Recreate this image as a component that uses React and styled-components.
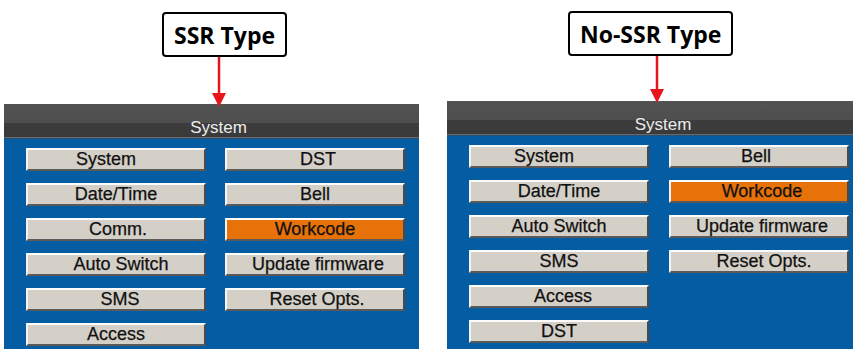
import React from 'react';
import styled, { createGlobalStyle } from 'styled-components';

const GlobalStyle = createGlobalStyle`
  body {
    margin: 0;
    background: #ffffff;
    overflow: hidden;
  }
`;

const Page = styled.div`
  display: flex;
  gap: 28px;
  width: 853px;
  height: 349px;
  padding-left: 4px;
  box-sizing: border-box;
  overflow: hidden;
`;

const Section = styled.div`
  display: flex;
  flex-direction: column;
  align-items: flex-start;
  width: ${(props) => props.width}px;
  height: 349px;
  padding-top: ${(props) => props.top}px;
  box-sizing: border-box;
`;

const Label = styled.div`
  margin-left: ${(props) => props.left}px;
  height: 45px;
  box-sizing: border-box;
  padding: 0 10px;
  display: flex;
  align-items: center;
  border: 2px solid #000000;
  border-radius: 4px;
  background: #ffffff;
  font-family: 'Open Sans', 'Liberation Sans', sans-serif;
  font-weight: 700;
  font-size: 23px;
  color: #000000;
  white-space: nowrap;
`;

const ArrowWrap = styled.div`
  margin-left: ${(props) => props.left}px;
  margin-bottom: ${(props) => -props.overlap}px;
  height: ${(props) => props.h}px;
  position: relative;
  z-index: 2;
  line-height: 0;
`;

const Panel = styled.div`
  flex: 1;
  align-self: stretch;
  display: flex;
  flex-direction: column;
  background: #045ca3;
`;

const Header = styled.div`
  height: 35px;
  box-sizing: border-box;
  padding-left: ${(props) => props.shift}px;
  display: flex;
  justify-content: center;
  align-items: flex-end;
  padding-bottom: 1px;
  background: linear-gradient(
    to bottom,
    #525252 0,
    #4e4e4e 19px,
    #3c3c3c 19px,
    #3a3a3a 33px,
    #6a6a6a 33px,
    #6a6a6a 34px,
    #2a4f78 34px
  );
  font-family: 'Liberation Sans', Arial, sans-serif;
  font-size: 17px;
  color: #ececec;
`;

const Grid = styled.div`
  display: grid;
  grid-auto-flow: column;
  grid-template-rows: repeat(6, 23px);
  grid-template-columns: 180px 180px;
  column-gap: ${(props) => props.gap}px;
  row-gap: 12px;
  padding: 9px 0 0 22px;
`;

const Button = styled.div`
  box-sizing: border-box;
  display: flex;
  align-items: center;
  justify-content: center;
  padding-left: ${(props) => (props.shift > 0 ? props.shift : 0)}px;
  padding-right: ${(props) => (props.shift < 0 ? -props.shift : 0)}px;
  background: ${(props) => (props.active ? '#e8720a' : '#d4d0c8')};
  border-top: 2px solid #fbfbfb;
  border-left: 2px solid #f4f4f4;
  border-right: 2px solid #4a4a4a;
  border-bottom: 2px solid #5a5a5a;
  font-family: 'Liberation Sans', Arial, sans-serif;
  font-size: 18px;
  color: #111111;
  -webkit-text-stroke: 0.25px #111111;
  white-space: nowrap;
`;

function Arrow({ left, h, overlap }) {
  return (
    <ArrowWrap left={left} h={h} overlap={overlap}>
      <svg width="20" height={h} viewBox={`0 0 20 ${h}`}>
        <line x1="10" y1="0" x2="10" y2={h - 13} stroke="#e8141c" strokeWidth="2.5" />
        <polygon points={`3,${h - 14} 17,${h - 14} 10,${h}`} fill="#e8141c" />
      </svg>
    </ArrowWrap>
  );
}

const ssrItems = [
  { name: 'System', shift: -20 },
  { name: 'Date/Time' },
  { name: 'Comm.', shift: 4 },
  { name: 'Auto Switch', shift: 10 },
  { name: 'SMS', shift: 8 },
  { name: 'Access' },
  { name: 'DST', shift: 6 },
  { name: 'Bell' },
  { name: 'Workcode', active: true },
  { name: 'Update firmware', shift: 6 },
  { name: 'Reset Opts.', shift: 4 },
];

const noSsrItems = [
  { name: 'System', shift: -30 },
  { name: 'Date/Time' },
  { name: 'Auto Switch' },
  { name: 'SMS' },
  { name: 'Access', shift: 8 },
  { name: 'DST' },
  { name: 'Bell', shift: -6 },
  { name: 'Workcode', shift: 6, active: true },
  { name: 'Update firmware', shift: 6 },
  { name: 'Reset Opts.', shift: 10 },
];

function Device({ title, width, top, labelLeft, arrowLeft, arrowH, overlap, headerShift, gap, items }) {
  return (
    <Section width={width} top={top}>
      <Label left={labelLeft}>{title}</Label>
      <Arrow left={arrowLeft} h={arrowH} overlap={overlap} />
      <Panel>
        <Header shift={headerShift}>System</Header>
        <Grid gap={gap}>
          {items.map((item, index) => (
            <Button key={index} shift={item.shift || 0} active={item.active}>
              {item.name}
            </Button>
          ))}
        </Grid>
      </Panel>
    </Section>
  );
}

export default function App() {
  return (
    <>
      <GlobalStyle />
      <Page>
        <Device
          title="SSR Type"
          width={415}
          top={12}
          labelLeft={158}
          arrowLeft={205}
          arrowH={50}
          overlap={3}
          headerShift={14}
          gap={19}
          items={ssrItems}
        />
        <Device
          title="No-SSR Type"
          width={406}
          top={11}
          labelLeft={121}
          arrowLeft={200}
          arrowH={47}
          overlap={2}
          headerShift={26}
          gap={20}
          items={noSsrItems}
        />
      </Page>
    </>
  );
}
